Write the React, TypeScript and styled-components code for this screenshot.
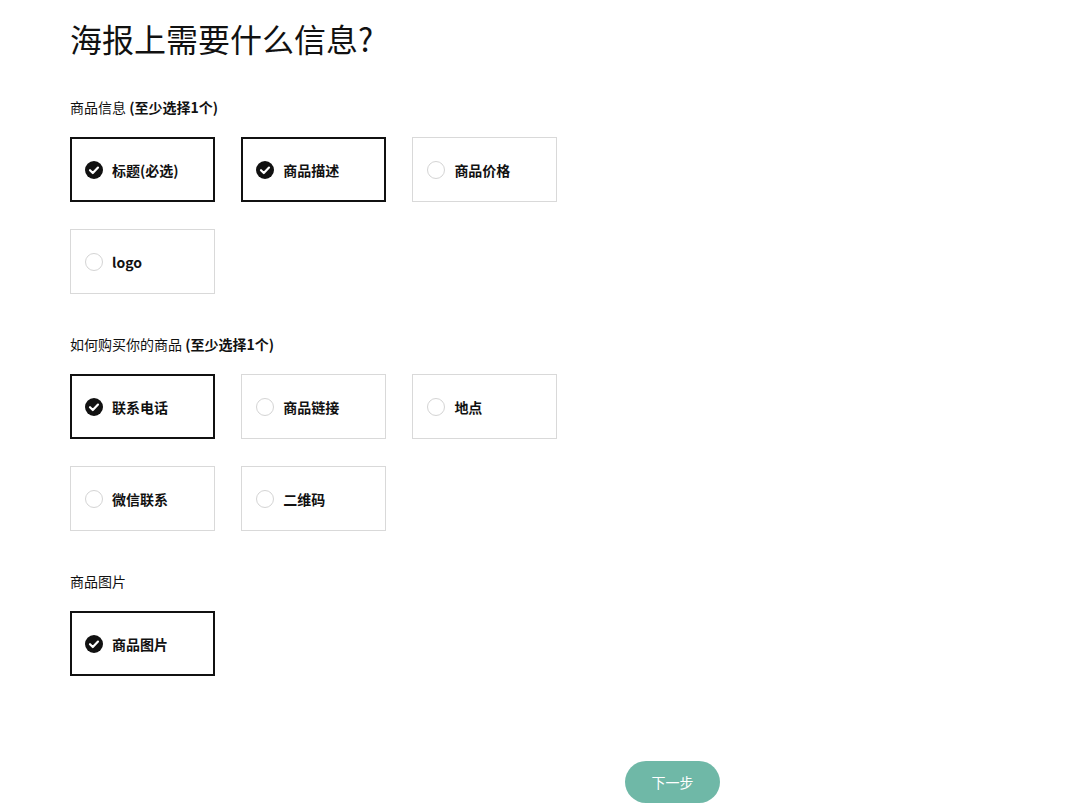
import React, { useState } from "react";
import styled, { createGlobalStyle } from "styled-components";

const Global = createGlobalStyle`
  html, body { margin: 0; padding: 0; background: #fff; }
  body { font-family: "Noto Sans CJK SC", "Noto Sans", sans-serif; color: #111; }
`;

const Page = styled.div`
  padding: 16px 0 0 70px;
  display: flex;
  flex-direction: column;
`;

const Title = styled.h1`
  margin: 0;
  font-size: 32px;
  line-height: 44px;
  font-weight: 400;
  color: #111;
`;

const Section = styled.section<{ $top: number }>`
  margin-top: ${(p) => p.$top}px;
  display: flex;
  flex-direction: column;
  gap: 20px;
`;

const Label = styled.div`
  font-size: 14px;
  line-height: 20px;
  color: #111;
  & b { font-weight: 700; }
`;

const Grid = styled.div`
  display: grid;
  grid-template-columns: repeat(3, 145px);
  column-gap: 26.2px;
  row-gap: 27px;
`;

const Card = styled.button<{ $on: boolean }>`
  box-sizing: border-box;
  height: 65px;
  width: 145px;
  background: #fff;
  border: ${(p) => (p.$on ? "2px solid #111" : "1px solid #d9d9d9")};
  padding: 0 0 0 ${(p) => (p.$on ? 13 : 14)}px;
  display: flex;
  align-items: center;
  gap: 9px;
  cursor: pointer;
  font-family: inherit;
  font-size: 14px;
  font-weight: 700;
  color: #111;
  text-align: left;
`;

const Empty = styled.span`
  box-sizing: border-box;
  width: 18px;
  height: 18px;
  border-radius: 50%;
  border: 1px solid #d4d4d4;
  flex: none;
`;

const Check = () => (
  <svg width="18" height="18" viewBox="0 0 18 18" style={{ flex: "none" }}>
    <circle cx="9" cy="9" r="9" fill="#111" />
    <path d="M5 9.2 L7.8 12 L13 6.6" stroke="#fff" strokeWidth="2.2" fill="none" strokeLinecap="round" strokeLinejoin="round" />
  </svg>
);

const Footer = styled.div`
  margin-top: 85px;
  padding-left: 555px;
  display: flex;
`;

const NextButton = styled.button`
  width: 95px;
  height: 42px;
  border-radius: 21px;
  border: none;
  background: #6fb8a7;
  color: #fff;
  font-family: inherit;
  font-size: 14px;
  cursor: pointer;
`;

type Opt = { label: string; on: boolean };

const sections: { title: React.ReactNode; top: number; opts: Opt[] }[] = [
  {
    title: (
      <>
        商品信息 <b>(至少选择1个)</b>
      </>
    ),
    top: 37,
    opts: [
      { label: "标题(必选)", on: true },
      { label: "商品描述", on: true },
      { label: "商品价格", on: false },
      { label: "logo", on: false },
    ],
  },
  {
    title: (
      <>
        如何购买你的商品 <b>(至少选择1个)</b>
      </>
    ),
    top: 40,
    opts: [
      { label: "联系电话", on: true },
      { label: "商品链接", on: false },
      { label: "地点", on: false },
      { label: "微信联系", on: false },
      { label: "二维码", on: false },
    ],
  },
  {
    title: <>商品图片</>,
    top: 40,
    opts: [{ label: "商品图片", on: true }],
  },
];

export default function App() {
  const [state, setState] = useState(sections.map((s) => s.opts.map((o) => o.on)));
  const toggle = (si: number, oi: number) =>
    setState((prev) => prev.map((row, i) => (i === si ? row.map((v, j) => (j === oi ? !v : v)) : row)));
  return (
    <>
      <Global />
      <Page>
        <Title>海报上需要什么信息?</Title>
        {sections.map((s, si) => (
          <Section key={si} $top={s.top}>
            <Label>{s.title}</Label>
            <Grid>
              {s.opts.map((o, oi) => {
                const on = state[si][oi];
                return (
                  <Card key={oi} $on={on} onClick={() => toggle(si, oi)}>
                    {on ? <Check /> : <Empty />}
                    {o.label}
                  </Card>
                );
              })}
            </Grid>
          </Section>
        ))}
        <Footer>
          <NextButton>下一步</NextButton>
        </Footer>
      </Page>
    </>
  );
}
